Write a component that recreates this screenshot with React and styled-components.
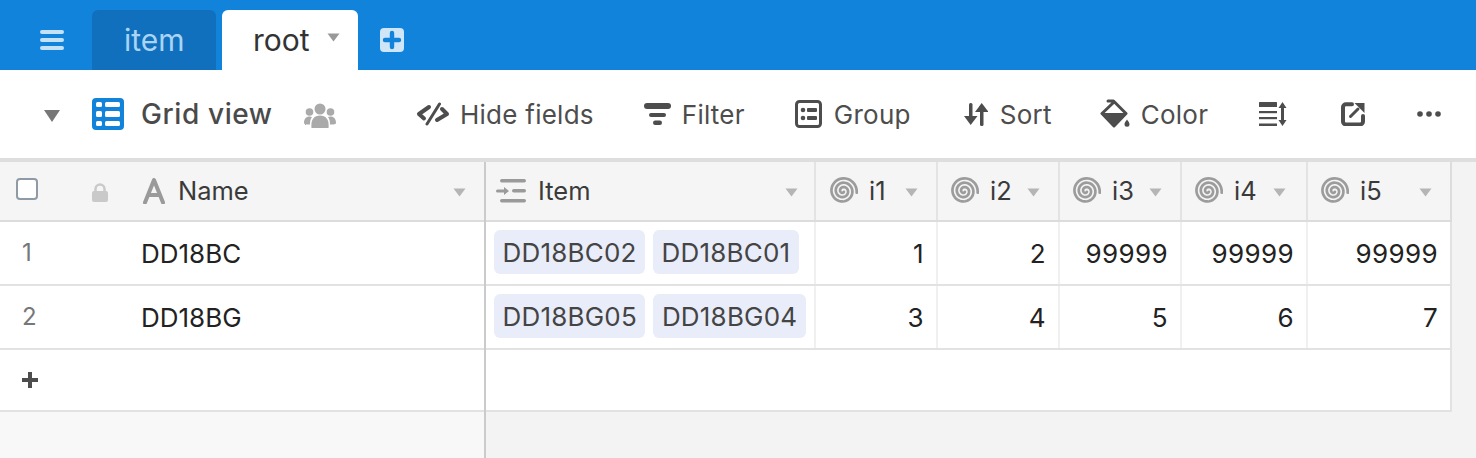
import React from 'react';
import styled, { createGlobalStyle } from 'styled-components';

const Global = createGlobalStyle`
  html, body { margin: 0; padding: 0; background: #f3f3f3; }
  body { font-family: Inter, "Liberation Sans", sans-serif; -webkit-font-smoothing: antialiased; }
  * { box-sizing: border-box; }
`;

const Page = styled.div`
  width: 1476px; height: 458px; overflow: hidden;
  display: flex; flex-direction: column;
`;
const TopBar = styled.header`
  height: 70px; background: #1283da; display: flex; align-items: flex-end;
  padding-left: 40px;
`;
const MenuIcon = styled.svg`
  width: 24px; height: 20px; margin-right: 28px; align-self: flex-start; margin-top: 30px; display: block;
`;
const Tab = styled.div`
  height: 60px; border-radius: 6px 6px 0 0;
  display: flex; align-items: center; font-size: 30px;
  width: ${p => p.$w}px;
  padding-left: ${p => p.$pad}px;
  margin-right: ${p => p.$mr}px;
  background: ${p => p.$active ? '#fff' : '#1170bd'};
  color: ${p => p.$active ? '#333' : '#a9d4f4'};
  font-weight: 400;
`;
const TabCaret = styled.svg`
  width: 13px; height: 9px; margin-left: 17px; margin-bottom: 6px; display: block;
`;
const AddTab = styled.svg`
  width: 24px; height: 24px; align-self: flex-start; margin-top: 28px; margin-left: 22px; display: block;
`;
const Toolbar = styled.div`
  height: 92px; background: #fff; border-bottom: 4px solid #dedede;
  display: flex; align-items: center; padding-left: 44px;
  color: #4a4a4a;
`;
const ViewCaret = styled.svg`
  width: 16px; height: 12px; margin-right: 32px; margin-top: 4px; display: block;
`;
const GridIcon = styled.svg`
  width: 32px; height: 32px; margin-right: 17px; display: block;
`;
const ViewName = styled.span`
  font-size: 28px; font-weight: 500; color: #4a4a4a; width: 163px; white-space: nowrap; letter-spacing: 0.6px;
`;
const People = styled.svg`
  width: 32px; height: 26px; margin-right: 80px; margin-top: 3px; display: block;
`;
const ToolButton = styled.div`
  display: flex; align-items: center; gap: ${p => p.$gap}px;
  margin-right: ${p => p.$mr}px; font-size: 26px; font-weight: 400; color: #4d4d4d; white-space: nowrap;
  letter-spacing: 0.25px;
`;
const ToolIcon = styled.svg`
  display: block; flex: none;
`;
const Grid = styled.div`
  flex: 1; display: flex; min-height: 0;
`;
const LeftPane = styled.section`
  width: 486px; border-right: 2px solid #cbcbcb; background: #f8f8f8; flex: none;
`;
const RightPane = styled.section`
  width: 966px; flex: none; background: #f3f3f3;
`;
const HeaderRow = styled.div`
  height: 60px; display: ${p => p.$grid ? 'grid' : 'flex'};
  grid-template-columns: 330px 122px 122px 122px 126px 144px;
  background: #f5f5f5; border-bottom: 2px solid #dcdcdc; align-items: stretch;
`;
const BodyRow = styled.div`
  height: 64px; display: ${p => p.$grid ? 'grid' : 'flex'};
  grid-template-columns: 330px 122px 122px 122px 126px 144px;
  background: #fff; border-bottom: 2px solid #e2e2e2; align-items: stretch;
`;
const AddRow = styled.div`
  height: 62px; background: #fff; border-bottom: 2px solid #e2e2e2; display: flex; align-items: center;
  padding-left: 22px; padding-bottom: 1px;
  border-right: ${p => p.$edge ? '2px solid #e2e2e2' : '0'};
`;
const CheckCell = styled.div`
  width: 92px; padding-left: 16px; display: flex; align-items: center; padding-bottom: 4px;
`;
const Check = styled.div`
  width: 22px; height: 22px; border: 2px solid #8e9aa5; border-radius: 4px; background: #fff;
`;
const LockIcon = styled.svg`
  width: 16px; height: 20px; margin-right: 35px; margin-top: 4px; align-self: center; display: block;
`;
const HeaderCell = styled.div`
  display: flex; align-items: center; font-size: 25.5px; color: #3a3a3a; padding-left: ${p => p.$pl}px;
  padding-right: ${p => p.$pr}px; padding-bottom: 1px; flex: ${p => p.$grow ? 1 : 'none'};
  border-right: ${p => p.$edge ? '2px solid #dcdcdc' : p.$line ? '2px solid #e3e3e3' : '0'};
`;
const HeaderLabel = styled.span`
  flex: 1; margin-left: ${p => p.$ml}px;
`;
const FieldCaret = styled.svg`
  width: 13px; height: 9px; display: block; flex: none; margin-top: 3px;
`;
const FieldIcon = styled.svg`
  display: block; flex: none; align-self: center;
`;
const RowNum = styled.div`
  width: 141px; padding-left: 22px; display: flex; align-items: center; font-size: 24px; color: #777; padding-bottom: 1px;
`;
const NameCell = styled.div`
  display: flex; align-items: center; font-size: 26px; color: #222;
`;
const LinkCell = styled.div`
  display: flex; align-items: center; gap: 8px; padding-left: 8px; border-right: 2px solid #f0f0f0; padding-bottom: 2px; white-space: nowrap;
`;
const Pill = styled.span`
  height: 44px; padding: 0 8.5px; background: #e9edf9; border-radius: 6px; color: #444; font-size: 26px;
  display: flex; align-items: center; letter-spacing: 0.2px;
`;
const NumCell = styled.div`
  display: flex; align-items: center; justify-content: flex-end; padding-right: 12px;
  font-size: 26px; color: #222; letter-spacing: 0.4px;
  border-right: 2px solid ${p => p.$edge ? '#e2e2e2' : '#f0f0f0'};
`;
const Plus = styled.svg`
  width: 16px; height: 16px; display: block;
`;

const caret = 'M0.5 0.5H12.5L6.5 8.5Z';
const Caret = () => (
  <FieldCaret viewBox="0 0 13 9"><path d={caret} fill="#b5b5b5" /></FieldCaret>
);

function spiralPath() {
  const pts = [];
  const cx = 15, cy = 15;
  const turns = 2.9, steps = 110;
  for (let i = 0; i <= steps; i++) {
    const t = i / steps;
    const a = 0.75 + t * turns * 2 * Math.PI;
    const r = 1.2 + t * 12.6;
    pts.push(`${i ? 'L' : 'M'}${(cx + r * Math.cos(a)).toFixed(2)} ${(cy + r * Math.sin(a)).toFixed(2)}`);
  }
  return pts.join('');
}
const SPIRAL = spiralPath();
const Spiral = () => (
  <FieldIcon width="30" height="30" viewBox="0 0 30 30">
    <path d={SPIRAL} fill="none" stroke="#9c9c9c" strokeWidth="2.7" strokeLinecap="round" />
  </FieldIcon>
);

const numericCols = [
  { name: 'i1', pl: 12, pr: 18 },
  { name: 'i2', pl: 11, pr: 18 },
  { name: 'i3', pl: 11, pr: 18 },
  { name: 'i4', pl: 11, pr: 20 },
  { name: 'i5', pl: 11, pr: 18, edge: true },
];
const rows = [
  { n: 1, name: 'DD18BC', items: ['DD18BC02', 'DD18BC01'], vals: [1, 2, 99999, 99999, 99999] },
  { n: 2, name: 'DD18BG', items: ['DD18BG05', 'DD18BG04'], vals: [3, 4, 5, 6, 7] },
];

export default function App() {
  return (
    <Page>
      <Global />
      <TopBar>
        <MenuIcon viewBox="0 0 24 20">
          <g fill="#c4e1f8"><rect y="0" width="24" height="4" rx="2" /><rect y="8" width="24" height="4" rx="2" /><rect y="16" width="24" height="4" rx="2" /></g>
        </MenuIcon>
        <Tab $w={124} $pad={32} $mr={6}>item</Tab>
        <Tab $active $w={136} $pad={31} $mr={0}>root
          <TabCaret viewBox="0 0 13 9"><path d={caret} fill="#999" /></TabCaret>
        </Tab>
        <AddTab viewBox="0 0 24 24">
          <rect width="24" height="24" rx="4" fill="#cfe5f8" />
          <path d="M12 5v14M5 12h14" stroke="#1283da" strokeWidth="4.4" strokeLinecap="round" />
        </AddTab>
      </TopBar>
      <Toolbar>
        <ViewCaret viewBox="0 0 16 12"><path d="M0 0H16L8 12Z" fill="#777" /></ViewCaret>
        <GridIcon viewBox="0 0 32 32">
          <rect width="32" height="32" rx="4" fill="#1283da" />
          <g fill="#fff">
            <rect x="4" y="4" width="6" height="5" rx="1.5" /><rect x="13" y="4" width="15" height="5" rx="1.5" />
            <rect x="4" y="13" width="6" height="6" rx="1.5" /><rect x="13" y="13" width="15" height="6" rx="1.5" />
            <rect x="4" y="23" width="6" height="5" rx="1.5" /><rect x="13" y="23" width="15" height="5" rx="1.5" />
          </g>
        </GridIcon>
        <ViewName>Grid view</ViewName>
        <People viewBox="0 0 32 26">
          <g fill="#aaa">
            <circle cx="16" cy="6" r="5.5" /><circle cx="5.5" cy="9" r="3.8" /><circle cx="26.5" cy="9" r="3.8" />
            <path d="M7.5 25c-1-9 3-12.5 8.500-12.5S25.500 16 24.500 25Z" />
            <path d="M0 20c0-4 2-6.500 5.500-6.500 1 0 2 .2 2.500.6C6.500 16 6 18.500 6 21.500 3 21.500 0 21.500 0 20Z" />
            <path d="M32 20c0-4-2-6.500-5.500-6.500-1 0-2 .2-2.500.6 1.500 1.900 2 4.400 2 7.400 3 0 6 0 6-1.500Z" />
          </g>
        </People>
        <ToolButton $gap={10} $mr={50}>
          <ToolIcon width="34" height="24" viewBox="0 0 34 24">
            <g fill="none" stroke="#4d4d4d" strokeLinecap="round" strokeLinejoin="round">
              <path d="M13 5 3 12l5 4.500" strokeWidth="4" />
              <path d="M23.500 2 11 22" strokeWidth="3" />
              <path d="M26 7l5 5-10 6" strokeWidth="4" />
            </g>
          </ToolIcon>
          Hide fields
        </ToolButton>
        <ToolButton $gap={11} $mr={50}>
          <ToolIcon width="27" height="24" viewBox="0 0 27 24">
            <g fill="#4d4d4d"><rect y="1" width="27" height="6" rx="3" /><rect x="5" y="11" width="17" height="4" rx="2" /><rect x="9" y="18.500" width="9" height="4.500" rx="2.200" /></g>
          </ToolIcon>
          Filter
        </ToolButton>
        <ToolButton $gap={12} $mr={53}>
          <ToolIcon width="27" height="28" viewBox="0 0 27 28">
            <rect x="1.500" y="1.500" width="24" height="25" rx="3" fill="none" stroke="#4d4d4d" strokeWidth="3" />
            <g fill="#4d4d4d"><circle cx="8" cy="10" r="2.300" /><circle cx="8" cy="18" r="2.300" /><rect x="12" y="8" width="10" height="4" rx="1" /><rect x="12" y="16" width="10" height="4" rx="1" /></g>
          </ToolIcon>
          Group
        </ToolButton>
        <ToolButton $gap={12} $mr={48}>
          <ToolIcon width="24" height="24" viewBox="0 0 24 24">
            <g fill="#4d4d4d">
              <rect x="5" y="1" width="3.500" height="16" rx="1.500" /><path d="M0 14h13.500L6.700 23Z" />
              <rect x="16" y="7" width="3.500" height="17" rx="1.500" /><path d="M11 10h13.500L17.700 1Z" />
            </g>
          </ToolIcon>
          Sort
        </ToolButton>
        <ToolButton $gap={11} $mr={51}>
          <ToolIcon width="30" height="30" viewBox="0 0 30 30">
            <path d="M8 2h5.500L26 14.500 14 27 2 14.500 13 4" fill="none" stroke="#4d4d4d" strokeWidth="3" strokeLinejoin="round" strokeLinecap="round" />
            <path d="M2 14h24.500L14 28Z" fill="#4d4d4d" />
            <path d="M27 20.500c1.500 2 2.500 3.300 2.500 4.700a2.500 2.500 0 0 1-5 0c0-1.400 1-2.700 2.500-4.700Z" fill="#4d4d4d" />
          </ToolIcon>
          Color
        </ToolButton>
        <ToolButton $gap={0} $mr={54}>
          <ToolIcon width="28" height="26" viewBox="0 0 28 26">
            <g fill="#4d4d4d">
              <rect y="1" width="18" height="5" rx=".5" /><rect y="10" width="18" height="2.200" /><rect y="16" width="18" height="2.200" /><rect y="22.500" width="18" height="2.500" />
              <rect x="22" y="3" width="3" height="20" /><path d="M19.500 7 23.500 1l4 6ZM19.500 19l4 6 4-6Z" />
            </g>
          </ToolIcon>
        </ToolButton>
        <ToolButton $gap={0} $mr={52}>
          <ToolIcon width="24" height="24" viewBox="0 0 24 24">
            <path d="M11 2.200H5a3 3 0 0 0-3 3v14.300a3 3 0 0 0 3 3h14a3 3 0 0 0 3-3V14" fill="none" stroke="#4d4d4d" strokeWidth="4" strokeLinecap="round" />
            <path d="M9.500 14.500 17 7" stroke="#4d4d4d" strokeWidth="3" strokeLinecap="round" />
            <path d="M13.500 1h10v10Z" fill="#4d4d4d" />
          </ToolIcon>
        </ToolButton>
        <ToolButton $gap={0} $mr={0}>
          <ToolIcon width="24" height="6" viewBox="0 0 24 6">
            <g fill="#4d4d4d"><circle cx="3" cy="3" r="2.800" /><circle cx="12" cy="3" r="2.800" /><circle cx="21" cy="3" r="2.800" /></g>
          </ToolIcon>
        </ToolButton>
      </Toolbar>
      <Grid>
        <LeftPane>
          <HeaderRow>
            <CheckCell><Check /></CheckCell>
            <LockIcon viewBox="0 0 16 20">
              <path d="M3.500 9V6a4.500 4.500 0 0 1 9 0v3" fill="none" stroke="#c9c9c9" strokeWidth="2.500" />
              <rect y="8" width="16" height="11" rx="2" fill="#c9c9c9" />
            </LockIcon>
            <FieldIcon width="22" height="26" viewBox="0 0 22 26">
              <path d="M2 24.500 11 2l9 22.500M5.500 17h11" fill="none" stroke="#9a9a9a" strokeWidth="4" strokeLinecap="round" strokeLinejoin="round" />
            </FieldIcon>
            <HeaderCell $grow $pl={13} $pr={18}><HeaderLabel>Name</HeaderLabel><Caret /></HeaderCell>
          </HeaderRow>
          {rows.map(r => (
            <BodyRow key={r.n}>
              <RowNum>{r.n}</RowNum>
              <NameCell>{r.name}</NameCell>
            </BodyRow>
          ))}
          <AddRow>
            <Plus viewBox="0 0 16 16"><path d="M8 0v16M0 8h16" stroke="#4d4d4d" strokeWidth="4" /></Plus>
          </AddRow>
        </LeftPane>
        <RightPane>
          <HeaderRow $grid>
            <HeaderCell $pl={10} $pr={16} $line>
              <FieldIcon width="30" height="24" viewBox="0 0 30 24">
                <g fill="#9a9a9a">
                  <rect x="4" y="0" width="26" height="3.500" rx="1.700" />
                  <rect y="10.500" width="10" height="3" rx="1.500" /><path d="M8 8l5 4-5 4Z" />
                  <rect x="16" y="10" width="14" height="3.500" rx="1.700" />
                  <rect x="4" y="20" width="26" height="3.500" rx="1.700" />
                </g>
              </FieldIcon>
              <HeaderLabel $ml={12}>Item</HeaderLabel><Caret />
            </HeaderCell>
            {numericCols.map(c => (
              <HeaderCell key={c.name} $pl={c.pl} $pr={c.pr} $line={!c.edge} $edge={c.edge}>
                <Spiral />
                <HeaderLabel $ml={11}>{c.name}</HeaderLabel><Caret />
              </HeaderCell>
            ))}
          </HeaderRow>
          {rows.map(r => (
            <BodyRow $grid key={r.n}>
              <LinkCell>{r.items.map(i => <Pill key={i}>{i}</Pill>)}</LinkCell>
              {r.vals.map((v, i) => <NumCell key={i} $edge={i === 4}>{v}</NumCell>)}
            </BodyRow>
          ))}
          <AddRow $edge />
        </RightPane>
      </Grid>
    </Page>
  );
}
